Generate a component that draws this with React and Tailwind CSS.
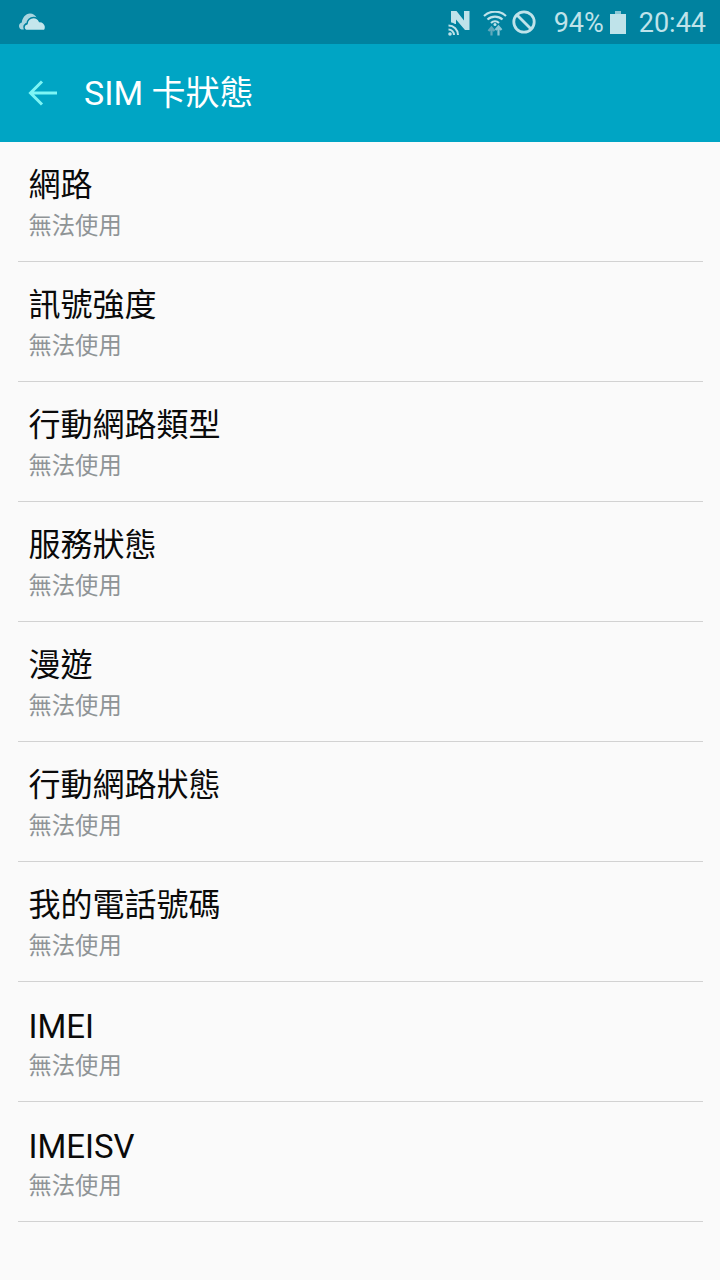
const rows = ["網路","訊號強度","行動網路類型","服務狀態","漫遊","行動網路狀態","我的電話號碼","IMEI","IMEISV"];
const font = { fontFamily: '"Roboto","Noto Sans CJK TC",sans-serif' };

function StatusBar() {
  return (
    <div className="h-[44px] bg-[#00829f] flex items-center justify-between pl-[19px] pr-[14px] text-[#bfe3ea]">
      <svg width="27" height="18" viewBox="0 0 27 18" className="-mt-[1px]">
        <path d="M2.500 16.500C1 16 0 14.500 0 13c0-1.800 1.200-3.200 2.800-3.600C3.200 5 6.500 0.500 11 0.500c3 0 5.500 1.700 6.500 4v6H6v6z" fill="#a9d6e0"/>
        <path d="M8.500 17.500C6.500 17.500 5 16 5 14.200c0-1.800 1.300-3.200 3-3.500C8.300 7.300 11 4.500 14.500 4.500c2.800 0 5 1.500 6 4 3-.2 5.700 2 6 5 .2 2-.5 4-1.500 4z" fill="#c5e6ec" stroke="#00829f" strokeWidth="1.500"/>
      </svg>
      <div className="flex items-center">
        <svg width="22" height="26" viewBox="0 0 22 26" className="mr-[13px] mt-[2px]">
          <path d="M3 1h5.500l7.500 9.500V1h5.500v19h-4.500L8 9.500V14H3z" fill="#bfe3ea"/>
          <path d="M0 13a12.500 12.500 0 0 1 12.500 12.500" fill="none" stroke="#00829f" strokeWidth="2"/>
          <circle cx="2" cy="24" r="1.800" fill="#bfe3ea"/>
          <path d="M0.500 19.500a5.500 5.500 0 0 1 5.500 5.500M0.500 15.500a9.500 9.500 0 0 1 9.500 9.500" fill="none" stroke="#bfe3ea" strokeWidth="2"/>
        </svg>
        <svg width="24" height="25" viewBox="0 0 24 25" fill="none" stroke="#bfe3ea" strokeWidth="2.200" className="mr-[5px] mt-[2px]">
          <path d="M1 5a16 16 0 0 1 22 0M4.500 8.500a11 11 0 0 1 15 0M8 12a6 6 0 0 1 8 0"/>
          <circle cx="12" cy="13.500" r="1.500" fill="#bfe3ea" stroke="none"/>
          <path d="M8.500 16.500v8M5.500 20l3-3.500 3 3.500" stroke="#5fa9bc"/>
          <path d="M15.500 24.500v-9M12.500 19l3-3.500 3 3.500" stroke="#8cc8d6"/>
        </svg>
        <svg width="24" height="24" viewBox="0 0 24 24" fill="none" stroke="#bfe3ea" strokeWidth="2.800" className="mr-[18px]">
          <circle cx="12" cy="12" r="10.200"/>
          <path d="M5 5l14 14"/>
        </svg>
        <span className="text-[27px] leading-none mt-[3px]" style={font}>94%</span>
        <div className="ml-[6px] mr-[13px] flex flex-col items-center">
          <div className="w-[6px] h-[3px] bg-[#8cc8d6]" />
          <div className="w-[16px] h-[20px] bg-[#bfe3ea]" />
        </div>
        <span className="text-[27px] leading-none mt-[3px]" style={font}>20:44</span>
      </div>
    </div>
  );
}

export default function App() {
  return (
    <div className="w-[720px] h-[1280px] bg-[#fafafa] overflow-hidden" style={font}>
      <StatusBar />
      <div className="h-[98px] bg-[#00a5c4] flex items-center pl-[28px]">
        <svg width="30" height="28" viewBox="0 0 30 28" fill="none" stroke="#7df5f5" strokeWidth="3">
          <path d="M29 14H3M14 2.500L2.500 14 14 25.500"/>
        </svg>
        <span className="ml-[26px] text-[34px] leading-none text-white">SIM 卡狀態</span>
      </div>
      <div className="pl-[18px] pr-[17px]">
        {rows.map((r) => (
          <div key={r} className="h-[120px] border-b border-[#d2d2d2] pl-[10.500px] pt-[24px]">
            <div className={r.startsWith("IMEI") ? "text-[33px] leading-[42px] text-[#0a0a0a]" : "text-[32px] leading-[38px] text-[#0a0a0a]"}>{r}</div>
            <div className={r.startsWith("IMEI") ? "mt-[3px] text-[23.300px] leading-[30px] text-[#8f9496]" : "mt-[7px] text-[23.300px] leading-[30px] text-[#8f9496]"}>無法使用</div>
          </div>
        ))}
      </div>
    </div>
  );
}
